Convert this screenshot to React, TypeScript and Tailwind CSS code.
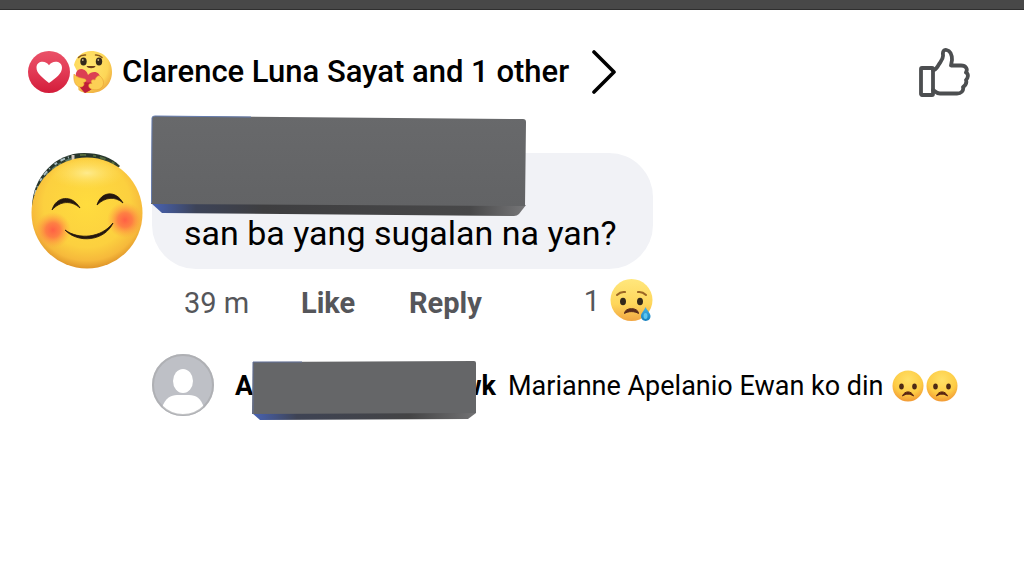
import { useId } from 'react';

export default function App() {
  return (
    <div className="min-h-screen overflow-hidden bg-white font-[Roboto,sans-serif] text-black">
      <div className="h-[10px] border-b border-[#2f2f2f] bg-[#484848]" />

      <main className="flex flex-col pt-9 pr-[54px] pl-7">
        <header className="flex h-[52px] items-center justify-between">
          <div className="flex items-center">
            <HeartReaction />
            <CareReaction />
            <a href="#reactions" className="ml-2.5 flex items-center gap-[22px] text-[31px] leading-9 font-medium whitespace-nowrap">
              Clarence Luna Sayat and 1 other
              <Chevron />
            </a>
          </div>
          <button type="button" aria-label="Like post">
            <ThumbIcon />
          </button>
        </header>

        <article className="mt-[55px] flex items-start gap-[9px] pl-[3px]">
          <SmileAvatar />
          <div className="flex min-w-0 flex-col">
            <div className="relative flex h-[116px] w-[501px] items-end rounded-[44px] bg-[#f1f2f6] px-8 pb-4">
              <div className="absolute -top-[38px] -left-px">
                <NameCover />
              </div>
              <p className="text-[34px] leading-10 whitespace-nowrap">san ba yang sugalan na yan?</p>
            </div>

            <div className="mt-2 flex h-12 w-[501px] items-center pl-8 text-[29px] leading-8 text-[#55565a]">
              <span className="w-[117px] pt-1">39 m</span>
              <button type="button" className="w-[108px] pt-1 text-left font-bold">Like</button>
              <button type="button" className="pt-1 text-left font-bold">Reply</button>
              <span className="ml-auto flex items-center gap-2.5">
                1
                <SadReaction />
              </span>
            </div>

            <div className="mt-7 flex items-center pt-px">
              <PersonAvatar />
              <div className="ml-[21px] flex items-center pt-0.5 text-[27px] leading-8 whitespace-nowrap">
                <span className="relative flex w-[261px] justify-between font-bold">
                  <span>A</span>
                  <span>wk</span>
                  <span className="absolute -top-2.5 left-[17px]">
                    <ReplyNameCover />
                  </span>
                </span>
                <span className="ml-3">Marianne Apelanio Ewan ko din</span>
                <span className="ml-2 flex gap-0.5">
                  <FrownEmoji />
                  <FrownEmoji />
                </span>
              </div>
            </div>
          </div>
        </article>
      </main>
    </div>
  );
}

function HeartReaction() {
  const id = useId();
  return (
    <svg width="42" height="42" viewBox="0 0 42 42" aria-hidden="true" className="shrink-0">
      <defs>
        <linearGradient id={id} x1="0" y1="0" x2="0" y2="1">
          <stop offset="0" stopColor="#ea5268" />
          <stop offset="0.5" stopColor="#e23a55" />
          <stop offset="1" stopColor="#d31c3a" />
        </linearGradient>
      </defs>
      <circle cx="21" cy="21" r="21" fill={`url(#${id})`} />
      <path d="M21 32 C14 26 8.500 22.500 8.500 16.700 C8.500 9.500 18 9 21 14.300 C24 9 34 9.500 34 16.700 C34 22.500 28 27 21 32Z" fill="#fff" />
    </svg>
  );
}

function CareReaction() {
  const id = useId();
  return (
    <svg width="42" height="42" viewBox="0 0 42 42" aria-hidden="true" className="shrink-0">
      <defs>
        <radialGradient id={id} cx="0.4" cy="0.35" r="0.7">
          <stop offset="0" stopColor="#ffe66f" />
          <stop offset="0.7" stopColor="#fdd657" />
          <stop offset="1" stopColor="#eda93f" />
        </radialGradient>
      </defs>
      <path d="M21 0 C34 0 42 9.500 42 21 C42 33 33 42 21 42 C15 42 11.500 41.500 8.500 39 L7 20 L4 14 C6 5 13 0 21 0Z" fill={`url(#${id})`} />
      <g fill="none" stroke="#8b5a1c" strokeWidth="1.5" strokeLinecap="round">
        <path d="M8.500 6.500 C10.500 4.500 13 3.800 15.500 4" />
        <path d="M25.500 4 C28 3.800 30 4.500 32 6.500" />
      </g>
      <ellipse cx="13.500" cy="10.500" rx="3.200" ry="4" fill="#33281b" />
      <ellipse cx="29" cy="10.500" rx="3.200" ry="4" fill="#33281b" />
      <circle cx="12.800" cy="9" r="0.9" fill="#c9b684" />
      <circle cx="28.300" cy="9" r="0.9" fill="#c9b684" />
      <path d="M16.500 15 H25.500 C25 18 17.500 18 16.500 15Z" fill="#70401a" />
      <path d="M15 42 C10 37 4 28 6 22 C8 16 16 17 18 24 C22 19 31 20 30 28 C29 34 21 39 15 42Z" fill="#dc4053" />
      <path d="M15 42 C10 37 5 30 5.500 25 C11 32 22 34 30 28 C29 34 21 39 15 42Z" fill="#bf1e38" />
      <path d="M4 23 C7 27 12 27 15 28 C17 29 16 31 13.500 31.500 C15 34 13 36 10.500 36 C6 36 3 31 4 23Z" fill="#fbc84a" stroke="#e59f35" strokeWidth="0.6" />
      <path d="M31 37 C28 40 20 39 19 36 C18 33 20 32 22 32.500 C20 30 22 28 25 29 C26 26 28 24 30 25 C35 29 34 35 31 37Z" fill="#fdd055" stroke="#e59f35" strokeWidth="0.6" />
    </svg>
  );
}

function Chevron() {
  return (
    <svg width="26" height="44" viewBox="0 0 26 44" fill="none" stroke="#000" strokeWidth="3.600" strokeLinecap="round" strokeLinejoin="round" aria-hidden="true">
      <path d="M3 2 L23 22 L3 42" />
    </svg>
  );
}

function ThumbIcon() {
  return (
    <svg width="52" height="52" viewBox="0 0 52 52" fill="none" stroke="#4c4e50" strokeWidth="3.800" strokeLinejoin="round" strokeLinecap="round" aria-hidden="true">
      <rect x="3" y="22" width="12" height="27" rx="1" />
      <path d="M15 24 C18 24 19 21.500 20.500 19 C23 15 25.500 13 25 9 C24.500 5 26 3.500 28.500 4 C33 5 34 10 34 14 L33 19.500 H43 C48 19.500 50 23 48 26.500 C51 28 50 32 48 34 C49 37 48 39 45 41 C46 45 43 47.500 39 47.500 H22 C18 47.500 17 45 15 44" />
    </svg>
  );
}

function SmileAvatar() {
  const id = useId();
  return (
    <svg width="112" height="116" viewBox="0 0 112 116" role="img" aria-label="Commenter" className="shrink-0">
      <defs>
        <radialGradient id={`${id}f`} cx="0.5" cy="0.42" r="0.6">
          <stop offset="0" stopColor="#ffdc3e" />
          <stop offset="0.65" stopColor="#fcd03f" />
          <stop offset="0.85" stopColor="#f6b93b" />
          <stop offset="1" stopColor="#d98b24" />
        </radialGradient>
        <radialGradient id={`${id}c`}>
          <stop offset="0" stopColor="#ff5a45" stopOpacity="0.95" />
          <stop offset="0.4" stopColor="#ff6545" stopOpacity="0.75" />
          <stop offset="1" stopColor="#ff9a40" stopOpacity="0" />
        </radialGradient>
        <radialGradient id={`${id}h`}>
          <stop offset="0" stopColor="#fff1a0" stopOpacity="0.8" />
          <stop offset="1" stopColor="#ffe060" stopOpacity="0" />
        </radialGradient>
      </defs>
      <path d="M1 53 C2 24 24 0 53 0 C68 0 80 4 89 13 L60 40 L20 60Z" fill="#27362c" />
      <g fill="none" strokeWidth="2">
        <path d="M4 42 C8 22 25 6 43 3" stroke="#a9bdc3" strokeDasharray="5 3 1 6 3 4" />
        <path d="M7 36 C12 22 28 9 43 5" stroke="#557568" strokeDasharray="3 5 6 2" />
        <path d="M49 2 C64 1 77 6 87 13" stroke="#53693d" strokeDasharray="6 7 3 4" />
      </g>
      <path d="M42 2 V8" stroke="#d5c8bd" strokeWidth="3" />
      <ellipse cx="56" cy="60" rx="55.500" ry="55.500" fill={`url(#${id}f)`} />
      <ellipse cx="56" cy="20" rx="38" ry="16" fill={`url(#${id}h)`} />
      <circle cx="22" cy="77" r="18" fill={`url(#${id}c)`} />
      <circle cx="94" cy="67" r="18" fill={`url(#${id}c)`} />
      <g fill="#24170e" stroke="#24170e" strokeWidth="0.8" strokeLinejoin="round">
        <path d="M21 57 C25 43 41 41 49 55 C40 47 29 48 21 57Z" />
        <path d="M66 52 C70 38 85 37 92 50 C84 43 74 44 66 52Z" />
        <path d="M34 77 C48 87 70 85 82 70 C74 88 47 91 34 77Z" />
      </g>
    </svg>
  );
}

function NameCover() {
  const id = useId();
  return (
    <svg width="376" height="102" viewBox="0 0 376 102" aria-hidden="true">
      <defs>
        <linearGradient id={`${id}a`} x1="0" y1="0" x2="0" y2="1">
          <stop offset="0" stopColor="#68696b" />
          <stop offset="1" stopColor="#626365" />
        </linearGradient>
        <linearGradient id={`${id}b`}>
          <stop offset="0" stopColor="#4863b5" />
          <stop offset="0.12" stopColor="#3c4358" />
          <stop offset="0.3" stopColor="#3e3e40" />
          <stop offset="0.85" stopColor="#484849" />
          <stop offset="1" stopColor="#777779" />
        </linearGradient>
      </defs>
      <path d="M0 88 L11 98 L363 101 Q366 101 368 99 L375 90 L180 80Z" fill={`url(#${id}b)`} />
      <path d="M1 3 Q1 1 4 1 L372 4 Q375 4 375 7 L374 91 L0 89Z" fill={`url(#${id}a)`} />
      <path d="M0.500 88 L1 3 Q1 1 4 1 L100 2" fill="none" stroke="#657caf" />
    </svg>
  );
}

function ReplyNameCover() {
  const id = useId();
  return (
    <svg width="224" height="60" viewBox="0 0 224 60" aria-hidden="true">
      <defs>
        <linearGradient id={id}>
          <stop offset="0" stopColor="#4863b5" />
          <stop offset="0.2" stopColor="#3e4354" />
          <stop offset="0.7" stopColor="#444445" />
          <stop offset="1" stopColor="#727274" />
        </linearGradient>
      </defs>
      <path d="M0 53 L8 60 L216 59 L224 53 L112 45Z" fill={`url(#${id})`} />
      <path d="M1 2 L222 1 Q224 1 224 3 V53 L0 54Z" fill="#656668" />
      <path d="M1 54 V2 L50 2" fill="none" stroke="#637099" />
    </svg>
  );
}

function SadReaction() {
  const id = useId();
  return (
    <svg width="43" height="44" viewBox="0 0 43 44" role="img" aria-label="Sad" className="shrink-0">
      <defs>
        <linearGradient id={`${id}f`} x1="0" y1="0" x2="0" y2="1">
          <stop offset="0" stopColor="#ffe77c" />
          <stop offset="0.6" stopColor="#fed65b" />
          <stop offset="1" stopColor="#f1a643" />
        </linearGradient>
        <linearGradient id={`${id}t`} x1="0" y1="0" x2="0" y2="1">
          <stop offset="0" stopColor="#47b4e8" />
          <stop offset="1" stopColor="#147fbd" />
        </linearGradient>
      </defs>
      <circle cx="21.500" cy="21" r="21" fill={`url(#${id}f)`} />
      <g fill="none" stroke="#9c6725" strokeWidth="2" strokeLinecap="round">
        <path d="M7 16 C9 14 12 12.500 15 13" />
        <path d="M28 13 C31 12.500 34 14 36 16" />
      </g>
      <ellipse cx="13" cy="22.500" rx="3" ry="3.800" fill="#33281b" />
      <ellipse cx="30" cy="22.500" rx="3" ry="3.800" fill="#33281b" />
      <path d="M14.500 34.500 C14.500 28 28.500 28 28.500 34.500 C25 32 18 32 14.500 34.500Z" fill="#5a2c1b" stroke="#5a2c1b" strokeLinejoin="round" />
      <path d="M35.500 28 C33.500 33 31 34 31 37 C31 43.500 40.500 43.500 40.500 37 C40.500 34 37.500 32 35.500 28Z" fill={`url(#${id}t)`} />
      <ellipse cx="35.500" cy="37" rx="2" ry="3" fill="#5cc6f0" />
    </svg>
  );
}

function PersonAvatar() {
  const id = useId();
  return (
    <svg width="62" height="62" viewBox="0 0 62 62" role="img" aria-label="Replier" className="shrink-0">
      <clipPath id={id}>
        <circle cx="31" cy="31" r="30" />
      </clipPath>
      <circle cx="31" cy="31" r="31" fill="#bec0c6" />
      <g clipPath={`url(#${id})`}>
        <ellipse cx="31" cy="27" rx="10" ry="12" fill="#fff" />
        <path d="M10 54 C13 44 19 41 25 41 H37 C44 41 49 44 52 54 V62 H10Z" fill="#fff" />
      </g>
      <circle cx="31" cy="31" r="30" fill="none" stroke="#a8a9ac" strokeOpacity="0.7" strokeWidth="2" />
    </svg>
  );
}

function FrownEmoji() {
  const id = useId();
  return (
    <svg width="32" height="32" viewBox="0 0 32 32" role="img" aria-label="Frowning face" className="shrink-0">
      <defs>
        <radialGradient id={id} cx="0.5" cy="0.3" r="0.7">
          <stop offset="0" stopColor="#ffe067" />
          <stop offset="0.65" stopColor="#fdcc45" />
          <stop offset="1" stopColor="#f29a35" />
        </radialGradient>
      </defs>
      <circle cx="16" cy="16" r="15.500" fill={`url(#${id})`} />
      <ellipse cx="9.500" cy="16.500" rx="2.300" ry="3" fill="#4c2915" />
      <ellipse cx="22.500" cy="16.500" rx="2.300" ry="3" fill="#4c2915" />
      <path d="M10.500 26 C12.500 20.500 19.500 20.500 21.500 26 C18 23.500 14 23.500 10.500 26Z" fill="#5a2512" stroke="#5a2512" strokeLinejoin="round" />
    </svg>
  );
}
